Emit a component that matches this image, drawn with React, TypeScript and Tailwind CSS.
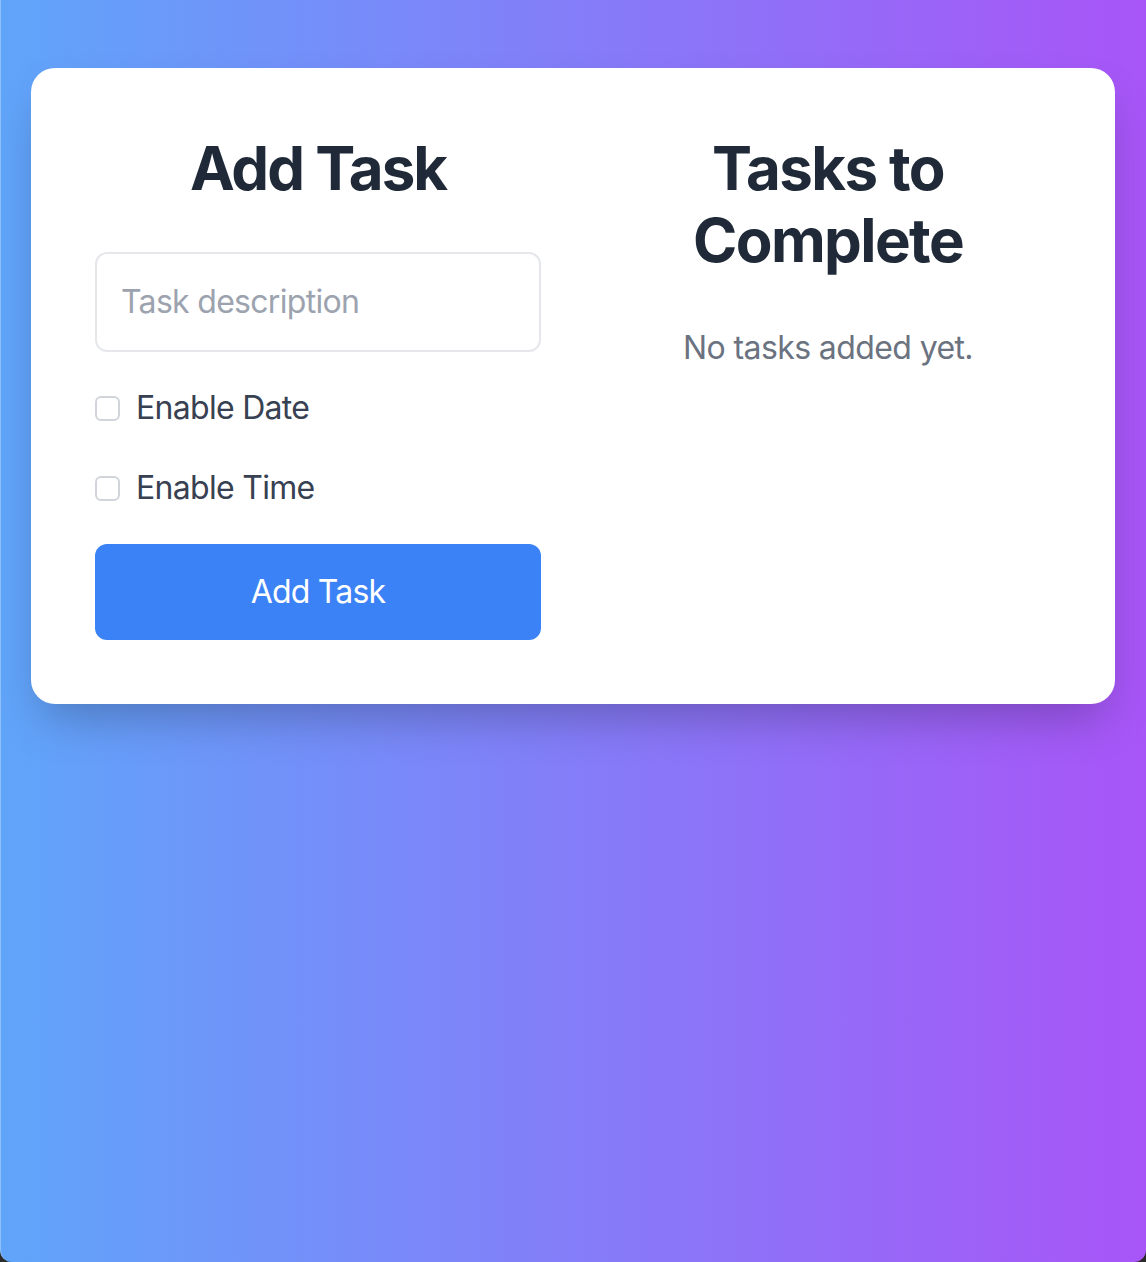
import { useState } from "react";

export default function App() {
  const [task, setTask] = useState("");
  const [enableDate, setEnableDate] = useState(false);
  const [enableTime, setEnableTime] = useState(false);

  return (
    <div className="bg-[#2b2b2b] min-h-[1262px] font-['Inter',sans-serif]">
      <div className="min-h-[1262px] rounded-b-[12px] border-l border-[#8ec0fb] bg-[linear-gradient(to_right,#60a5fa,#a855f7)] pl-[30px] pr-[31px] pt-[68px]">
        <div className="bg-white rounded-[24px] shadow-[0_24px_48px_-12px_rgba(0,0,0,0.25)] p-16 grid grid-cols-2 gap-16">
          {/* Add task form */}
          <div className="flex flex-col">
            <h2 className="text-[60px] leading-[72px] font-bold tracking-[-2px] text-[#1f2937] text-center mb-12">
              Add Task
            </h2>
            <input
              type="text"
              value={task}
              onChange={(e) => setTask(e.target.value)}
              placeholder="Task description"
              className="w-full border-2 border-[#e5e7eb] rounded-[12px] px-6 py-6 text-[32px] leading-[48px] tracking-[-0.7px] text-[#374151] placeholder:text-[#9ca3af] focus:outline-none mb-8"
            />
            <label className="flex items-center h-12 mb-8 text-[32px] leading-[48px] tracking-[-0.7px] text-[#374151]">
              <input
                type="checkbox"
                checked={enableDate}
                onChange={(e) => setEnableDate(e.target.checked)}
                className="appearance-none w-[25px] h-[25px] border-2 border-[#d1d5db] rounded-[6px] bg-white mr-4 checked:bg-[#3b82f6] checked:border-[#3b82f6]"
              />
              Enable Date
            </label>
            <label className="flex items-center h-12 mb-8 text-[32px] leading-[48px] tracking-[-0.7px] text-[#374151]">
              <input
                type="checkbox"
                checked={enableTime}
                onChange={(e) => setEnableTime(e.target.checked)}
                className="appearance-none w-[25px] h-[25px] border-2 border-[#d1d5db] rounded-[6px] bg-white mr-4 checked:bg-[#3b82f6] checked:border-[#3b82f6]"
              />
              Enable Time
            </label>
            <button
              type="button"
              className="w-full bg-[#3b82f6] text-white text-[32px] leading-[48px] tracking-[-0.8px] py-6 rounded-[12px]"
            >
              Add Task
            </button>
          </div>

          {/* Task list */}
          <div className="flex flex-col items-center">
            <h2 className="text-[60px] leading-[72px] font-bold tracking-[-1.6px] text-[#1f2937] text-center mb-12">
              Tasks to
              <br />
              Complete
            </h2>
            <p className="text-[32px] leading-[48px] tracking-[-0.6px] text-[#6b7280] text-center">
              No tasks added yet.
            </p>
          </div>
        </div>
      </div>
    </div>
  );
}
